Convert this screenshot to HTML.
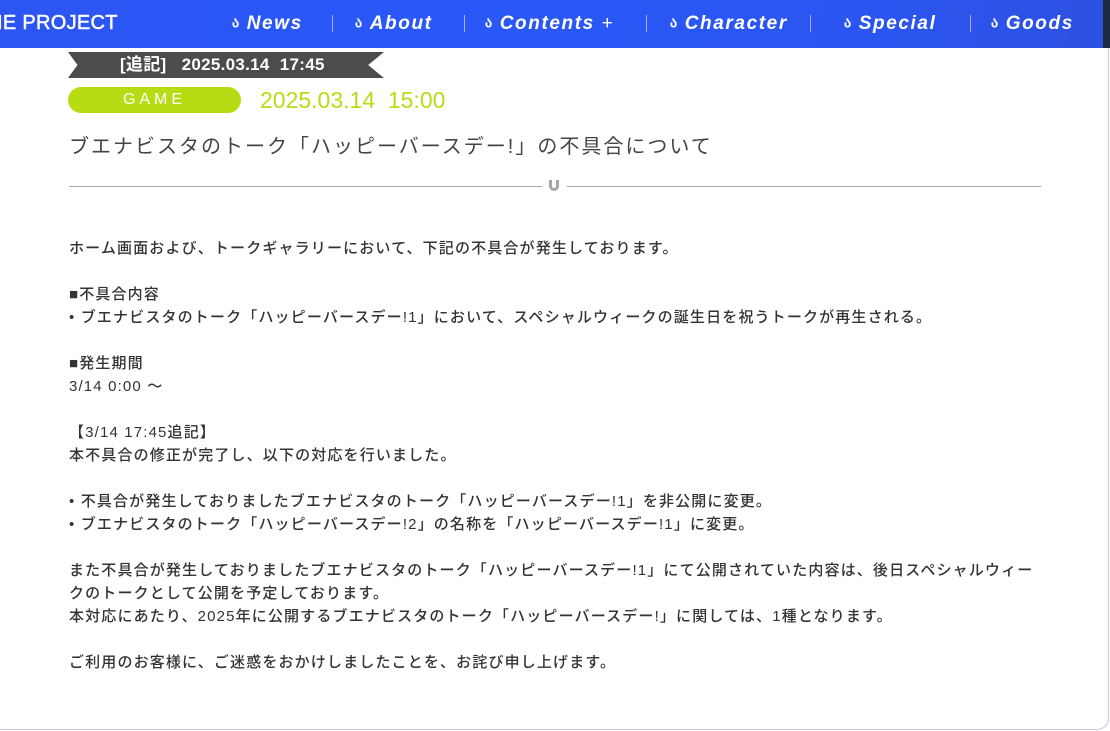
<!DOCTYPE html>
<html><head><meta charset="utf-8"><style>
*{margin:0;padding:0;box-sizing:border-box}
body{width:1110px;height:731px;overflow:hidden;background:#fff;font-family:"Liberation Sans","Noto Sans CJK JP",sans-serif;position:relative}
.card{position:absolute;left:-10px;top:30px;width:1119px;height:700px;border:1.5px solid #c9c7e2;border-radius:12px;background:#fff}
.hdr{position:absolute;left:0;top:0;width:1103px;height:48px;background:linear-gradient(100deg,#2c55f3,#2a58f8 40%,#2b55f0 80%,#2c50e0);}
.strip{position:absolute;left:1103px;top:0;width:7px;height:48px;background:#1e2a45}
.logo{position:absolute;left:-3px;top:12px;color:#fff;font-size:20px;font-weight:normal;letter-spacing:0.3px;-webkit-text-stroke:0.5px #fff}
.nav{position:absolute;top:13px;color:#fff;font-size:19px;font-weight:bold;font-style:italic;letter-spacing:1.6px;white-space:nowrap}
.nav i{font-style:normal;font-size:14px;margin-right:6px;position:relative;top:-2px;font-weight:bold}
.sep{position:absolute;top:15px;width:1px;height:17px;background:rgba(255,255,255,.55)}
.rib{position:absolute;left:68px;top:52px;width:316px;height:26px;background:#4c4c4c;clip-path:polygon(0 0,100% 0,95% 50%,100% 100%,0 100%,3% 50%);color:#fff;font-weight:bold;font-size:17px;line-height:26px;padding-left:52px;letter-spacing:0.3px}
.tag{position:absolute;left:68px;top:87px;width:173px;height:26px;border-radius:13px;background:#b8dc14;color:#fff;font-size:16px;line-height:26px;text-align:center;letter-spacing:4px}
.date{position:absolute;left:260px;top:86px;color:#b8dc14;font-size:23px;line-height:28px}
.title{position:absolute;left:69px;top:133px;color:#444;font-size:20px;letter-spacing:2px;line-height:28px;white-space:nowrap}
.hr{position:absolute;top:186px;height:1px;background:#aaa}
.u{position:absolute;left:549px;top:180px;width:10px;height:11px;border:3px solid #a6a6a6;border-top:none;border-radius:0 0 5px 5px}
.body{position:absolute;left:69px;top:237px;color:#333;font-size:15px;line-height:23px;letter-spacing:1.15px;white-space:nowrap;font-weight:500}
</style></head><body>
<div class="card"></div>
<div class="hdr"></div><div class="strip"></div>
<div class="logo">IE PROJECT</div>
<div class="nav" style="left:232px"><i>ა</i>News</div>
<div class="sep" style="left:332px"></div>
<div class="nav" style="left:355px"><i>ა</i>About</div>
<div class="sep" style="left:464px"></div>
<div class="nav" style="left:485px"><i>ა</i>Contents <span style="font-style:normal;font-weight:normal">+</span></div>
<div class="sep" style="left:646px"></div>
<div class="nav" style="left:670px"><i>ა</i>Character</div>
<div class="sep" style="left:810px"></div>
<div class="nav" style="left:844px"><i>ა</i>Special</div>
<div class="sep" style="left:970px"></div>
<div class="nav" style="left:991px"><i>ა</i>Goods</div>
<div class="rib">[追記]&nbsp;&nbsp; 2025.03.14&nbsp; 17:45</div>
<div class="tag">GAME</div>
<div class="date">2025.03.14&nbsp; 15:00</div>
<div class="title">ブエナビスタのトーク「ハッピーバースデー!」の不具合について</div>
<div class="hr" style="left:69px;width:473px"></div>
<div class="u"></div>
<div class="hr" style="left:567px;width:474px"></div>
<div class="body">ホーム画面および、トークギャラリーにおいて、下記の不具合が発生しております。<br><br>■不具合内容<br>• ブエナビスタのトーク「ハッピーバースデー!1」において、スペシャルウィークの誕生日を祝うトークが再生される。<br><br>■発生期間<br>3/14 0:00 ～<br><br>【3/14 17:45追記】<br>本不具合の修正が完了し、以下の対応を行いました。<br><br>• 不具合が発生しておりましたブエナビスタのトーク「ハッピーバースデー!1」を非公開に変更。<br>• ブエナビスタのトーク「ハッピーバースデー!2」の名称を「ハッピーバースデー!1」に変更。<br><br>また不具合が発生しておりましたブエナビスタのトーク「ハッピーバースデー!1」にて公開されていた内容は、後日スペシャルウィー<br>クのトークとして公開を予定しております。<br>本対応にあたり、2025年に公開するブエナビスタのトーク「ハッピーバースデー!」に関しては、1種となります。<br><br>ご利用のお客様に、ご迷惑をおかけしましたことを、お詫び申し上げます。</div>
</body></html>
